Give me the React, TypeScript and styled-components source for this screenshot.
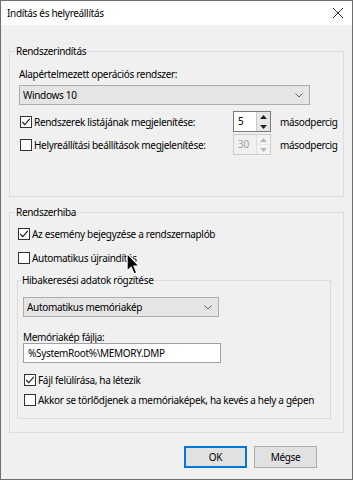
import styled, { createGlobalStyle } from "styled-components";

const GlobalStyle = createGlobalStyle`
  body {
    margin: 0;
    background: #f0f0f0;
    font-family: "Segoe UI", "Noto Sans", sans-serif;
    font-size: 10px;
    letter-spacing: -0.32px;
    color: #000;
  }
`;

const Window = styled.div`
  position: relative;
  display: flex;
  flex-direction: column;
  width: 353px;
  height: 480px;
  box-sizing: border-box;
  border: 1px solid #6e6e6e;
  background: #f0f0f0;
  overflow: hidden;
  white-space: nowrap;
`;

const TitleBar = styled.div`
  display: flex;
  align-items: center;
  justify-content: space-between;
  height: 24px;
  padding: 0 6px 0 6px;
  background: #fff;
`;

const Title = styled.span`
  line-height: 16px;
  font-size: 10px;
`;

const CloseButton = styled.div`
  display: flex;
  align-items: center;
  justify-content: center;
  width: 16px;
  height: 16px;
`;

const Body = styled.div`
  flex: 1;
  display: flex;
  flex-direction: column;
  padding: 19px 8px 0 8px;
`;

const Group = styled.fieldset<{ $gapBottom?: number; $gapTop?: number }>`
  margin: ${(p) => p.$gapTop ?? 0}px 0 ${(p) => p.$gapBottom ?? 0}px 0;
  padding: 0;
  border: 1px solid #dcdcdc;
  min-width: 0;
`;

const Legend = styled.legend<{ $offset?: number }>`
  margin-left: ${(p) => p.$offset ?? 5}px;
  padding: 0 1px;
  line-height: 14px;
  color: #000;
`;

const GroupContent = styled.div<{ $pad: string }>`
  display: flex;
  flex-direction: column;
  padding: ${(p) => p.$pad};
`;

const FieldLabel = styled.div<{ $top: number; $lh?: number }>`
  margin-top: ${(p) => p.$top}px;
  line-height: ${(p) => p.$lh ?? 16}px;
`;

const Combo = styled.div<{ $width: number; $top: number }>`
  display: flex;
  align-items: center;
  justify-content: space-between;
  box-sizing: border-box;
  width: ${(p) => p.$width}px;
  height: 20px;
  margin-top: ${(p) => p.$top}px;
  padding: 0 6px 0 3px;
  background: #e5e5e5;
  border: 1px solid #adadad;
  line-height: 16px;
`;

const TextBox = styled.div<{ $width: number }>`
  box-sizing: border-box;
  width: ${(p) => p.$width}px;
  height: 20px;
  padding: 0 4px;
  background: #fff;
  border: 1px solid #a0a0a0;
  line-height: 18px;
`;

const SpinRow = styled.div<{ $top: number }>`
  display: grid;
  grid-template-columns: 214px 38px auto;
  align-items: center;
  height: 21px;
  margin-top: ${(p) => p.$top}px;
`;

const CheckRow = styled.label<{ $top: number }>`
  display: flex;
  align-items: center;
  height: 16px;
  margin-top: ${(p) => p.$top}px;
  margin-left: 1px;
`;

const Box = styled.span`
  display: flex;
  flex-shrink: 0;
  align-items: center;
  justify-content: center;
  box-sizing: border-box;
  width: 12px;
  height: 12px;
  margin-right: 2px;
  background: #fff;
  border: 1px solid #333;
`;

const Spin = styled.div<{ $disabled?: boolean }>`
  display: flex;
  box-sizing: border-box;
  width: 38px;
  height: 21px;
  background: ${(p) => (p.$disabled ? "#f0f0f0" : "#fff")};
  border: 1px solid ${(p) => (p.$disabled ? "#cccccc" : "#7a7a7a")};
  color: ${(p) => (p.$disabled ? "#a0a0a0" : "#000")};
`;

const SpinValue = styled.div`
  flex: 1;
  padding-left: 4px;
  line-height: 19px;
`;

const SpinArrows = styled.div<{ $disabled?: boolean }>`
  display: flex;
  flex-direction: column;
  width: 13px;
  border-left: 1px solid ${(p) => (p.$disabled ? "#e0e0e0" : "#c8c8c8")};
`;

const SpinHalf = styled.div<{ $disabled?: boolean }>`
  flex: 1;
  display: flex;
  align-items: center;
  justify-content: center;
  background: ${(p) => (p.$disabled ? "#f4f4f4" : "#e8e8e8")};
  & + & {
    border-top: 1px solid ${(p) => (p.$disabled ? "#e8e8e8" : "#d4d4d4")};
  }
`;

const Unit = styled.span`
  margin-left: 9px;
`;

const ButtonBar = styled.div`
  display: flex;
  justify-content: flex-end;
  gap: 7px;
  margin-top: 13px;
  padding-right: 27px;
`;

const Button = styled.button<{ $default?: boolean }>`
  box-sizing: border-box;
  width: 63px;
  height: 22px;
  padding: 0;
  font: inherit;
  letter-spacing: inherit;
  color: #000;
  background: #e1e1e1;
  border: ${(p) => (p.$default ? "2px solid #0078d7" : "1px solid #adadad")};
`;

const Cursor = styled.svg`
  position: absolute;
  left: 124px;
  top: 252px;
`;

function Check() {
  return (
    <svg width="10" height="10" viewBox="0 0 10 10">
      <path d="M1.2 5 L3.8 7.6 L8.8 1.8" fill="none" stroke="#222" strokeWidth="1.2" />
    </svg>
  );
}

function CheckBox({ checked, label, top }: { checked?: boolean; label: string; top: number }) {
  return (
    <CheckRow $top={top}>
      <Box>{checked && <Check />}</Box>
      <span>{label}</span>
    </CheckRow>
  );
}

function Chevron() {
  return (
    <svg width="8" height="5" viewBox="0 0 8 5">
      <path d="M0.5 0.5 L4 4 L7.5 0.5" fill="none" stroke="#606060" strokeWidth="1" />
    </svg>
  );
}

function SpinBox({ value, disabled }: { value: string; disabled?: boolean }) {
  const c = disabled ? "#b8b8b8" : "#222";
  return (
    <Spin $disabled={disabled}>
      <SpinValue>{value}</SpinValue>
      <SpinArrows $disabled={disabled}>
        <SpinHalf $disabled={disabled}>
          <svg width="7" height="4" viewBox="0 0 7 4">
            <path d="M0 4 L3.5 0 L7 4 Z" fill={c} />
          </svg>
        </SpinHalf>
        <SpinHalf $disabled={disabled}>
          <svg width="7" height="4" viewBox="0 0 7 4">
            <path d="M0 0 L3.5 4 L7 0 Z" fill={c} />
          </svg>
        </SpinHalf>
      </SpinArrows>
    </Spin>
  );
}

export default function App() {
  return (
    <Window>
      <GlobalStyle />
      <TitleBar>
        <Title>Indítás és helyreállítás</Title>
        <CloseButton>
          <svg width="12" height="12" viewBox="0 0 12 12">
            <path d="M1 1 L11 11 M11 1 L1 11" stroke="#333" strokeWidth="1" />
          </svg>
        </CloseButton>
      </TitleBar>
      <Body>
        <Group $gapBottom={8}>
          <Legend>Rendszerindítás</Legend>
          <GroupContent $pad="0 0 41px 9px">
            <FieldLabel $top={8}>Alapértelmezett operációs rendszer:</FieldLabel>
            <Combo $width={291} $top={3}>
              <span>Windows 10</span>
              <Chevron />
            </Combo>
            <SpinRow $top={6}>
              <CheckBox checked label="Rendszerek listájának megjelenítése:" top={0} />
              <SpinBox value="5" />
              <Unit>másodpercig</Unit>
            </SpinRow>
            <SpinRow $top={2}>
              <CheckBox label="Helyreállítási beállítások megjelenítése:" top={0} />
              <SpinBox value="30" disabled />
              <Unit>másodpercig</Unit>
            </SpinRow>
          </GroupContent>
        </Group>

        <Group>
          <Legend>Rendszerhiba</Legend>
          <GroupContent $pad="0 12px 13px 7px">
            <CheckBox checked label="Az esemény bejegyzése a rendszernaplób" top={7} />
            <CheckBox label="Automatikus újraindítás" top={8} />
            <Group $gapTop={7}>
              <Legend $offset={3}>Hibakeresési adatok rögzítése</Legend>
              <GroupContent $pad="0 0 10px 5px">
                <Combo $width={196} $top={10}>
                  <span>Automatikus memóriakép</span>
                  <Chevron />
                </Combo>
                <FieldLabel $top={14} $lh={12}>Memóriakép fájlja:</FieldLabel>
                <TextBox $width={198}>%SystemRoot%\MEMORY.DMP</TextBox>
                <CheckBox checked label="Fájl felülírása, ha létezik" top={9} />
                <CheckBox label="Akkor se törlődjenek a memóriaképek, ha kevés a hely a gépen" top={4} />
              </GroupContent>
            </Group>
          </GroupContent>
        </Group>

        <ButtonBar>
          <Button $default>OK</Button>
          <Button>Mégse</Button>
        </ButtonBar>
      </Body>
      <Cursor width="17" height="22" viewBox="0 0 12 19">
        <path d="M0.5 0.5 L0.5 15.5 L4 12.2 L6.6 18 L8.8 17 L6.3 11.3 L10.8 11.3 Z" fill="#000" stroke="#fff" strokeWidth="0.9" />
      </Cursor>
    </Window>
  );
}
